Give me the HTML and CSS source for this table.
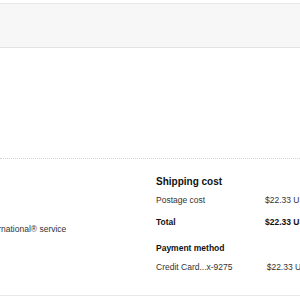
FILE: index.html
```html
<!DOCTYPE html>
<html>
<head>
<meta charset="utf-8">
<link rel="stylesheet" href="styles.css">
</head>
<body>
<div class="page">
  <div class="band"></div>
  <div class="gap"></div>
  <div class="summary">
    <div class="left">
      <p class="service">International® service</p>
    </div>
    <div class="right">
      <h3 class="heading">Shipping cost</h3>
      <div class="row"><span class="label">Postage cost</span><span class="amount">$22.33 USD</span></div>
      <div class="row total"><span class="label">Total</span><span class="amount">$22.33 USD</span></div>
      <h4 class="subheading">Payment method</h4>
      <div class="row pay"><span class="label">Credit Card...x-9275</span><span class="amount">$22.33 USD</span></div>
    </div>
  </div>
</div>
</body>
</html>
```

FILE: styles.css
```css
html, body {
  margin: 0;
  padding: 0;
  overflow: hidden;
  background: #fff;
}
.page {
  width: 300px;
  height: 300px;
  overflow: hidden;
  font-family: "Liberation Sans", Arial, sans-serif;
  color: #333;
  padding-top: 3px;
  box-sizing: border-box;
}
.band {
  height: 43px;
  background: #f7f7f7;
  border-top: 1px solid #e8e8e8;
  border-bottom: 1px solid #e3e3e3;
}
.gap {
  height: 110px;
}
.summary {
  display: flex;
  border-top: 1px dotted #d2d2d2;
  border-bottom: 1px solid #e8e8e8;
  width: 320px;
}
.left {
  width: 156px;
  flex: none;
  padding-top: 64px;
}
.service {
  margin: 0 0 0 -16px;
  font-size: 8.5px;
  line-height: 12px;
  white-space: nowrap;
  color: #333;
}
.right {
  flex: none;
  width: 164px;
  padding: 17px 0 22.5px;
}
.heading {
  margin: 0;
  font-size: 10px;
  line-height: 12px;
  font-weight: bold;
  color: #111;
}
.row {
  display: flex;
  font-size: 8.5px;
  line-height: 12px;
  white-space: nowrap;
  margin-top: 6px;
}
.row .label {
  width: 109px;
  flex: none;
}
.row.total {
  margin-top: 10px;
  font-weight: bold;
  color: #111;
}
.subheading {
  margin: 14px 0 0;
  font-size: 8.5px;
  line-height: 12px;
  font-weight: bold;
  color: #111;
}
.row.pay {
  margin-top: 6.5px;
}
.row.pay .amount {
  padding-left: 1.7px;
}
```
